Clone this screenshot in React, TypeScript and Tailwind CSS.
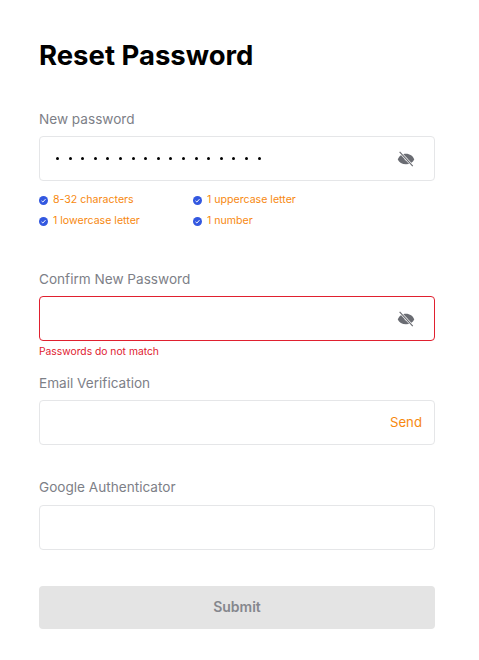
import React from 'react';

const EyeOff = () => (
  <svg width="18" height="18" viewBox="0 0 24 24" fill="#6a6c72">
    <path d="M12 5C6.800 5 2.800 8 1 12.500c1.800 4 5.800 6.500 11 6.500s9.200-2.500 11-6.500C21.200 8 17.200 5 12 5z" />
    <circle cx="12" cy="12" r="2" fill="#c9cacc" />
    <path d="M3.500 2.500l17.500 19" stroke="#ffffff" strokeWidth="3" />
    <path d="M3.500 2.500l17.500 19" stroke="#6a6c72" strokeWidth="1.500" />
  </svg>
);

const Check = () => (
  <svg width="9" height="9" viewBox="0 0 10 10" className="shrink-0">
    <circle cx="5" cy="5" r="5" fill="#3358e0" />
    <path d="M2.800 5.400l1.500 1.300 2.900-3.200" fill="none" stroke="#ffffff" strokeWidth="1.100" />
  </svg>
);

const Rule = ({ text }: { text: string }) => (
  <div className="flex items-center gap-[5px]">
    <Check />
    <span className="text-[10.600px] leading-[14px] text-[#f7880f]">{text}</span>
  </div>
);

const Label = ({ text }: { text: string }) => (
  <div className="text-[13.600px] leading-[20px] text-[#7d8087]">{text}</div>
);

export default function App() {
  return (
    <div className="w-[479px] h-[660px] bg-white px-[39px] pt-[38px] font-['Inter','Liberation_Sans',sans-serif]">
      <h1 className="text-[27.500px] leading-[34px] font-bold text-black">Reset Password</h1>

      <div className="mt-[37px]">
        <Label text="New password" />
        <div className="mt-[7px] h-[45px] w-[396px] flex items-center justify-between border border-[#e5e6e8] rounded pl-[16px] pr-[19px]">
          <div className="flex gap-[9.600px]">
            {Array.from({ length: 17 }).map((_, i) => (
              <span key={i} className="w-[3px] h-[3px] rounded-full bg-black"></span>
            ))}
          </div>
          <EyeOff />
        </div>
        <div className="mt-[12px] grid grid-cols-[154px_1fr] gap-y-[7px]">
          <Rule text="8-32 characters" />
          <Rule text="1 uppercase letter" />
          <Rule text="1 lowercase letter" />
          <Rule text="1 number" />
        </div>
      </div>

      <div className="mt-[41px]">
        <Label text="Confirm New Password" />
        <div className="mt-[7px] h-[45px] w-[396px] flex items-center justify-end border border-[#e0202f] rounded pr-[19px]">
          <EyeOff />
        </div>
        <div className="mt-[3px] text-[10.300px] leading-[14px] text-[#e0202f]">Passwords do not match</div>
      </div>

      <div className="mt-[15px]">
        <Label text="Email Verification" />
        <div className="mt-[7px] h-[45px] w-[396px] flex items-center justify-end border border-[#e5e6e8] rounded pr-[12px]">
          <span className="text-[13.200px] text-[#f7880f]">Send</span>
        </div>
      </div>

      <div className="mt-[32px]">
        <Label text="Google Authenticator" />
        <div className="mt-[8px] h-[45px] w-[396px] border border-[#e5e6e8] rounded"></div>
      </div>

      <button className="mt-[36px] h-[43px] w-[396px] rounded bg-[#e4e4e4] pb-[3px] text-[14px] font-semibold text-[#85878d]">
        Submit
      </button>
    </div>
  );
}
